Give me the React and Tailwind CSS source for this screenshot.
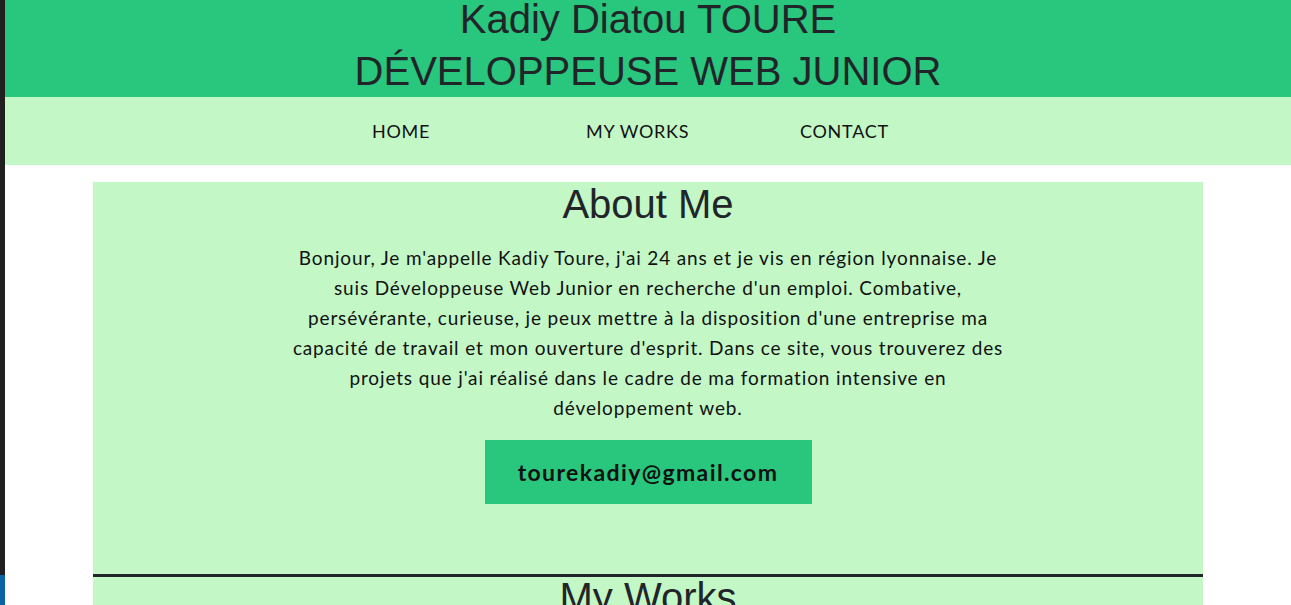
import React from 'react';

const heading = { fontFamily: '"Liberation Sans", Arial, sans-serif' };
const body = { fontFamily: 'Lato, "Open Sans", sans-serif' };

function NavBar() {
  const links = ['HOME', 'MY WORKS', 'CONTACT'];
  return (
    <nav className="bg-[#c3f7c5] h-[68px] flex items-center pl-[367px]" style={body}>
      {links.map((l) => (
        <a key={l} href="#" className="w-[214px] text-[18px] text-[#111] tracking-[0.04em]">
          {l}
        </a>
      ))}
    </nav>
  );
}

export default function App() {
  return (
    <div className="flex min-h-screen bg-white text-[#212529]">
      {/* editor gutter strip */}
      <div className="w-[5px] shrink-0 flex flex-col">
        <div className="h-[575px] bg-[#202020]" />
        <div className="h-[30px] bg-[#0b63a6]" />
      </div>

      <div className="flex-1 min-w-0">
        <header className="bg-[#29c67d] h-[97px] overflow-hidden text-center">
          <h1 className="text-[40px] leading-[52px] -mt-[7px]" style={heading}>
            Kadiy Diatou TOURE
            <br />
            DÉVELOPPEUSE WEB JUNIOR
          </h1>
        </header>

        <NavBar />

        <main className="w-[1110px] mx-auto mt-[17px]">
          <section className="bg-[#c3f7c5] h-[392px] flex flex-col items-center">
            <h2 className="text-[40px] leading-none pt-[2px]" style={heading}>About Me</h2>
            <p
              className="mt-[19px] w-[740px] text-center text-[19px] leading-[30px] tracking-[0.045em] text-[#111]"
              style={body}
            >
              Bonjour, Je m'appelle Kadiy Toure, j'ai 24 ans et je vis en région lyonnaise. Je
              <br />
              suis Développeuse Web Junior en recherche d'un emploi. Combative,
              <br />
              persévérante, curieuse, je peux mettre à la disposition d'une entreprise ma
              <br />
              capacité de travail et mon ouverture d'esprit. Dans ce site, vous trouverez des
              <br />
              projets que j'ai réalisé dans le cadre de ma formation intensive en
              <br />
              développement web.
            </p>
            <a
              href="mailto:tourekadiy@gmail.com"
              className="mt-[17px] w-[327px] h-[64px] flex items-center justify-center bg-[#29c67d] text-[23px] font-bold tracking-[0.06em] text-[#111]"
              style={body}
            >
              tourekadiy@gmail.com
            </a>
          </section>

          <section className="bg-[#c3f7c5] border-t-[3px] border-[#212529] h-[300px] flex flex-col items-center">
            <h2 className="text-[40px] leading-none" style={heading}>My Works</h2>
          </section>
        </main>
      </div>
    </div>
  );
}
